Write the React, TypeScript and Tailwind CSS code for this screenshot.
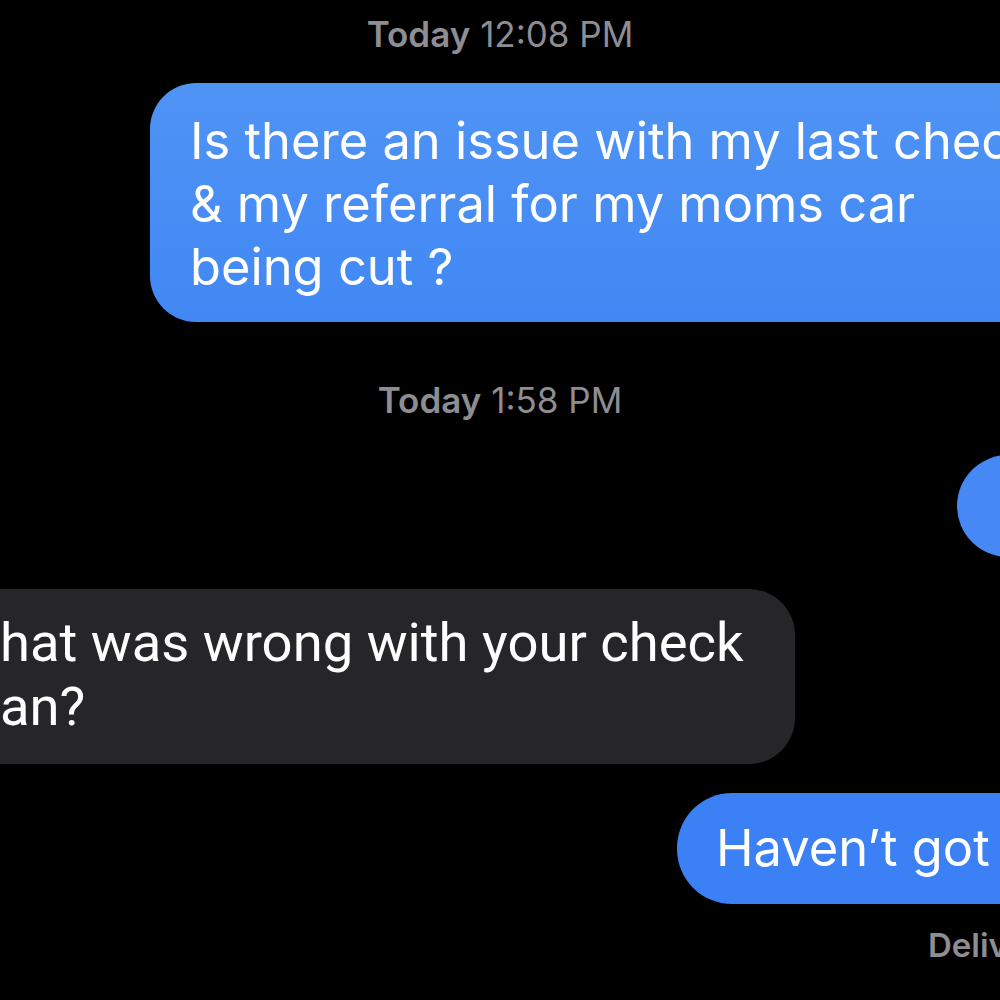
export default function App() {
  return (
    <div className="w-[1000px] h-[1000px] bg-black overflow-hidden flex flex-col font-['Inter',sans-serif]">
      {/* timestamp */}
      <div className="h-[66px] pt-[14px] text-center text-[35px] leading-[40px] text-[#8d8d92]">
        <span className="font-semibold">Today</span> 12:08 PM
      </div>

      {/* outgoing, long */}
      <div className="ml-[150px] mr-[-300px] mt-[17px] h-[239px] rounded-[46px] bg-gradient-to-b from-[#4f93f4] to-[#4188f4] pl-[40px] pt-[26px] text-white text-[50.6px] leading-[63px] whitespace-nowrap">
        Is there an issue with my last check
        <br />
        &amp; my referral for my moms car
        <br />
        being cut ?
      </div>

      <div className="mt-[58px] h-[40px] text-center text-[35px] leading-[40px] text-[#8d8d92]">
        <span className="font-semibold">Today</span> 1:58 PM
      </div>

      {/* outgoing, mostly off-screen */}
      <div className="self-end mr-[-200px] mt-[35px] w-[243px] h-[102px] rounded-[51px] bg-[#4588f6]" />

      {/* incoming */}
      <div className="ml-[-60px] mt-[32px] w-[855px] h-[175px] rounded-[46px] bg-[#262628] pl-[60px] pt-[22px] text-white text-[54.4px] leading-[64px] whitespace-nowrap font-['Roboto',sans-serif]">
        hat was wrong with your check
        <br />
        an?
      </div>

      {/* outgoing */}
      <div className="self-end mr-[-200px] mt-[29px] w-[523px] h-[111px] rounded-[55px] bg-[#3b80f5] pl-[39px] pt-[23px] text-white text-[50.6px] leading-[63px] whitespace-nowrap">
        Haven’t got it yet
      </div>

      <div className="mt-[21px] pl-[928px] text-[33px] leading-[40px] font-semibold text-[#8d8d92] whitespace-nowrap">
        Delivered
      </div>
    </div>
  )
}
